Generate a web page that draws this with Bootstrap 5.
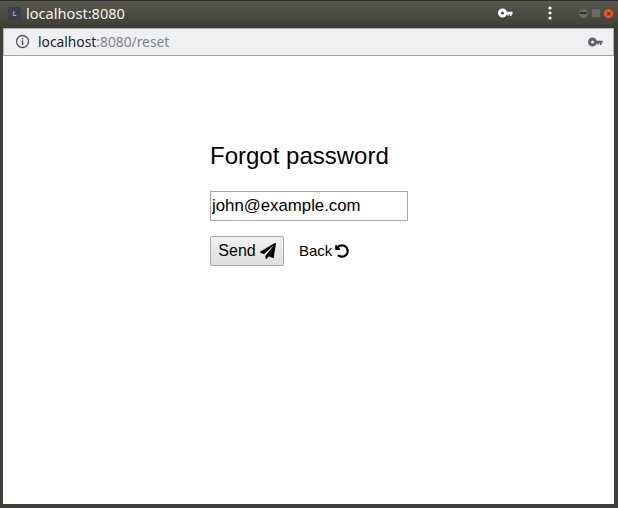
<!DOCTYPE html>
<html lang="en">
<head>
  <meta charset="UTF-8">
  <title>Forgot password</title>
  <link rel="stylesheet" href="https://cdn.jsdelivr.net/npm/bootstrap@5.3.0/dist/css/bootstrap.min.css">
  <style>
    html, body { height: 100%; overflow: hidden; }
    body { font-family: "Liberation Sans", Arial, sans-serif; color: #000; background: #3c3b37; }
    .win-frame { width: 618px; height: 508px; background: #3f3e3a; padding: 0 4px 4px 3px; }
    .title-bar { height: 28px; margin: 0 -4px 0 -3px; padding: 0 4px 2px 8px; background: linear-gradient(#5a5950, #3d3c36); border-top: 1px solid #2f2e2b; color: #f4f3ef; font-family: "Noto Sans", sans-serif; font-size: 14.6px; }
    .tab-favicon { width: 13px; height: 13px; margin-right: 5px; background: #3a3f4c; color: #aab; font-size: 7px; font-weight: 700; line-height: 13px; text-align: center; }
    .addr-bar { height: 28px; background: #eff0f2; border: 1px solid #b4b4b2; border-bottom-color: #a5a5a3; padding: 0 10px 0 11px; font-family: "Noto Sans", sans-serif; font-size: 13.8px; }
    .addr-host { color: #20242c; }
    .addr-rest { color: #80848c; }
    .page-area { height: 449px; background: #fff; padding: 86px 0 0 207px; }
    .page-title { font-size: 24px; font-weight: 400; line-height: 28px; margin: 0 0 21px; }
    .email-box { display: block; width: 198px; height: 30px; margin-bottom: 15px; border: 1px solid #a9a9a9; padding: 0 1px; font-size: 16.8px; color: #000; outline: 0; }
    .send-btn { width: 74px; height: 30px; padding: 0; border: 1px solid #a9a9a9; border-radius: 2px; background: linear-gradient(#f2f2f2, #dedede); font-size: 16px; color: #000; }
    .back-link { font-size: 15px; color: #000; text-decoration: none; margin-left: 15px; gap: 3px; }
    .win-btns { margin-left: 26px; gap: 2px; }
    .menu-dots { margin-left: 35px; }
    .win-dot { width: 11px; height: 11px; border-radius: 50%; background: #6b6a64; border: 1px solid #4d4c47; }
    .win-close { background: #e2581f; color: #4a2410; font-size: 9px; line-height: 9px; text-align: center; }
    .win-max { border-radius: 2px; width: 10px; height: 10px; }
  </style>
</head>
<body>
  <div class="win-frame d-flex flex-column">
    <!-- window title -->
    <div class="title-bar d-flex align-items-center">
      <div class="tab-favicon">L</div>
      <span class="flex-grow-1">localhost:8080</span>
      <svg width="15" height="10" viewBox="0 0 15 10"><circle cx="4.5" cy="5" r="3" fill="none" stroke="#fff" stroke-width="3"/><path d="M8 3.7h6.5v2.6h-1v1.6h-1.6V6.3h-1v1.2H9.3V6.3H8z" fill="#fff"/></svg>
      <svg class="menu-dots" width="4" height="14" viewBox="0 0 4 14"><circle cx="2" cy="2" r="1.6" fill="#fff"/><circle cx="2" cy="7" r="1.6" fill="#fff"/><circle cx="2" cy="12" r="1.6" fill="#fff"/></svg>
      <div class="win-btns d-flex align-items-center">
        <div class="win-dot d-flex align-items-center justify-content-center"><svg width="7" height="2"><rect width="7" height="2" fill="#33322e"/></svg></div>
        <div class="win-dot win-max"></div>
        <div class="win-dot win-close">×</div>
      </div>
    </div>
    <!-- address bar -->
    <div class="addr-bar d-flex align-items-center">
      <svg width="15" height="15" viewBox="0 0 15 15" class="me-2"><circle cx="7.5" cy="7.5" r="6" fill="none" stroke="#50545c" stroke-width="1.3"/><rect x="6.8" y="6.5" width="1.5" height="4.5" fill="#50545c"/><rect x="6.8" y="4" width="1.5" height="1.5" fill="#50545c"/></svg>
      <span class="flex-grow-1"><span class="addr-host">localhost</span><span class="addr-rest">:8080/reset</span></span>
      <svg width="15" height="10" viewBox="0 0 15 10"><circle cx="4.5" cy="5" r="3" fill="none" stroke="#606268" stroke-width="3"/><path d="M8 3.7h6.5v2.6h-1v1.6h-1.6V6.3h-1v1.2H9.3V6.3H8z" fill="#606268"/></svg>
    </div>
    <!-- page -->
    <div class="page-area">
      <h1 class="page-title">Forgot password</h1>
      <form>
        <input class="email-box" type="text" value="john@example.com">
        <div class="d-flex align-items-center">
          <button type="button" class="send-btn d-flex align-items-center justify-content-center gap-1">Send
            <svg width="16" height="16" viewBox="0 0 512 512"><path d="M476 3.2L12.5 270.6c-18.1 10.4-15.8 35.6 2.2 43.2L121 358.4l287.3-253.2c5.5-4.9 13.3 2.6 8.6 8.3L176 407v80.5c0 23.6 28.5 32.9 42.5 15.8L282 426l124.6 52.2c14.2 6 30.4-2.9 33-18.2l72-432C515 7.8 493.3-6.8 476 3.2z"/></svg>
          </button>
          <a href="#" class="back-link d-flex align-items-center">Back
            <svg width="14" height="14" viewBox="0 0 512 512"><path d="M255.545 8c-66.269.119-126.438 26.233-170.86 68.685L48.971 40.971C33.851 25.851 8 36.559 8 57.941V192c0 13.255 10.745 24 24 24h134.059c21.382 0 32.09-25.851 16.971-40.971l-41.75-41.75c30.864-28.899 70.801-44.907 113.23-45.273 92.398-.798 170.283 73.977 169.484 169.442C423.236 348.009 349.816 424 256 424c-41.127 0-79.997-14.678-110.63-41.556-4.743-4.161-11.906-3.908-16.368.553L89.34 422.659c-4.872 4.872-4.631 12.815.482 17.433C133.798 479.813 192.074 504 256 504c136.966 0 247.999-111.033 248-247.998C504.001 119.193 392.354 7.755 255.545 8z"/></svg>
          </a>
        </div>
      </form>
    </div>
  </div>
  <script src="https://cdn.jsdelivr.net/npm/bootstrap@5.3.0/dist/js/bootstrap.bundle.min.js"></script>
</body>
</html>
